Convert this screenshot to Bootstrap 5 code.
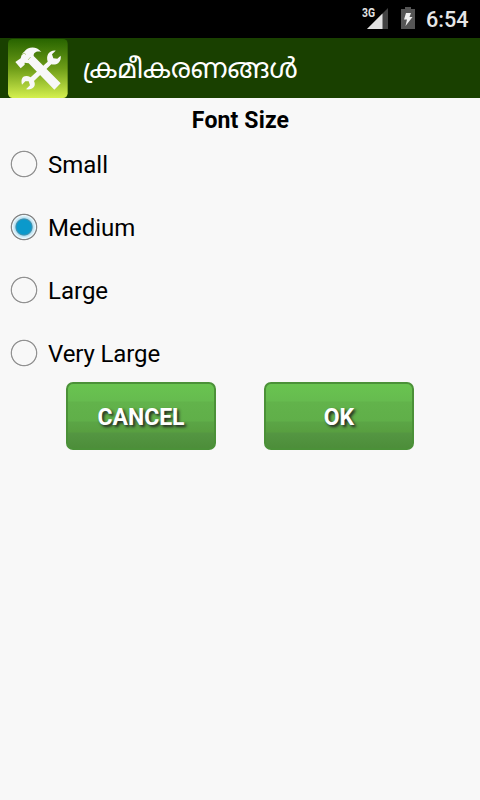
<!DOCTYPE html>
<html lang="ml">
<head>
<meta charset="utf-8">
<meta name="viewport" content="width=device-width, initial-scale=1">
<title>Settings</title>
<link href="https://cdn.jsdelivr.net/npm/bootstrap@5.3.0/dist/css/bootstrap.min.css" rel="stylesheet">
<style>
body{font-family:Roboto,"Noto Sans Malayalam",sans-serif;background:#f8f8f8;color:#000;height:800px;overflow:hidden}
svg{display:block;flex:none}
.status-bar{height:38px;background:#000;color:#e6e6e6;padding-right:12px}
.battery{margin:0 0 2px 11px}
.clock{font-size:21.6px;line-height:38px;font-weight:500;margin-left:11px;padding-top:1px;width:42px;white-space:nowrap}
.title-bar{height:60px;background:#194000;padding-left:8px;color:#fff}
.title-text{font-size:26.9px;line-height:58px;padding-top:2px;margin-left:15px;font-weight:400;white-space:nowrap}
.size-heading{font-size:23px;letter-spacing:.15px;line-height:27px;font-weight:700;margin:9px 0 0;padding-left:1px}
.option{height:63px;padding-left:10px;margin:0}
.option-label{font-size:24px;line-height:28px;margin-left:10px;padding-top:2px}
.option:last-child .option-label{letter-spacing:-.12px}
.options{margin-top:-2px}
.radio-dot{appearance:none;width:28px;height:28px;margin:0;background:radial-gradient(circle,transparent 11.6px,#929292 12.4px,#929292 12.9px,transparent 13.7px)}
.radio-dot:checked{background:radial-gradient(circle,#0b99cb 7px,#4b91ab 8.2px,#b5e0f1 9px,#edf8fd 11.6px,#858585 12.4px,#858585 12.9px,transparent 13.7px)}
.actions{gap:48px;margin-top:-2px}
.btn-green{width:150px;height:68px;border:2px solid #4b9138;border-radius:7px;color:#fff;font-size:23px;font-weight:700;padding:5px 0 0;text-shadow:2px 2px 3px #222;background:linear-gradient(#69c450 0,#66bb4f 17px,#62b34b 18px,#60af49 37px,#5ba546 38px,#589f40 48px,#549642 49px,#4d8e3a 64px)}
.btn-green:hover{color:#fff}
</style>
</head>
<body>
<header>
<div class="status-bar d-flex justify-content-end align-items-center">
<svg width="28" height="24" viewBox="0 0 28 24"><path d="M26 1V22H5z" fill="#424242"/><path d="M20.5 6.5V22H5z" fill="#e2e2e2"/><text x="0" y="10" font-family="Roboto" font-size="12" font-weight="700" fill="#e2e2e2" textLength="13" lengthAdjust="spacingAndGlyphs">3G</text></svg>
<svg class="battery" width="14" height="22" viewBox="0 0 14 22"><path d="M4 0H10V2H14V22H0V2H4z" fill="#555"/><path d="M5 6H10L8.5 10H11.5L4.5 19L6 12.5H3z" fill="#f0f0f0"/></svg>
<span class="clock">6:54</span>
</div>
<div class="title-bar d-flex align-items-center">
<svg width="60" height="60" viewBox="0 0 180 180">
<defs><linearGradient id="tile" x1="0" y1="0" x2="0" y2="1"><stop offset="0" stop-color="#286400"/><stop offset=".5" stop-color="#6e9d18"/><stop offset="1" stop-color="#d5f04f"/></linearGradient></defs>
<rect x="0" y="3" width="179" height="177" rx="14" fill="url(#tile)"/>
<g fill="#f8f8f8">
<path d="M22 72L38 61C40 51 44 44 50 40C58 27 84 21 100 42C88 38 76 42 77 54L158 136L139 155L62 76L50 74L50 80L38 91z"/>
<path d="M119 71C113 52 124 36 143 38L132 49L136 61L148 62L158 53C161 70 148 83 130 79L78 129C86 144 74 157 54 154L66 142L62 130L52 130L42 140C36 119 49 108 68 118z"/>
</g>
<path d="M42 51L48 45L54 50M60 66L68 57" fill="none" stroke="#78a31f" stroke-width="1.5"/>
</svg>
<span class="title-text">ക്രമീകരണങ്ങൾ</span>
</div>
</header>
<main>
<h1 class="size-heading text-center">Font Size</h1>
<div class="options">
<label class="option d-flex align-items-center"><input class="radio-dot" type="radio" name="size"><span class="option-label">Small</span></label>
<label class="option d-flex align-items-center"><input class="radio-dot" type="radio" name="size" checked><span class="option-label">Medium</span></label>
<label class="option d-flex align-items-center"><input class="radio-dot" type="radio" name="size"><span class="option-label">Large</span></label>
<label class="option d-flex align-items-center"><input class="radio-dot" type="radio" name="size"><span class="option-label">Very Large</span></label>
</div>
<div class="actions d-flex justify-content-center">
<button class="btn btn-green" type="button">CANCEL</button>
<button class="btn btn-green" type="button">OK</button>
</div>
</main>
<script src="https://cdn.jsdelivr.net/npm/bootstrap@5.3.0/dist/js/bootstrap.bundle.min.js"></script>
</body>
</html>
